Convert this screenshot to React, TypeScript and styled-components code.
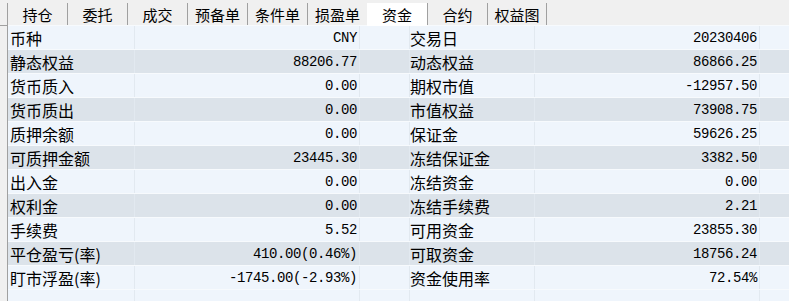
import React from "react";
import styled, { createGlobalStyle } from "styled-components";

const Global = createGlobalStyle`
  html, body { margin: 0; padding: 0; background: #f0f0f0; }
  body { width: 789px; height: 301px; overflow: hidden; }
`;

const Page = styled.div`
  width: 789px;
  height: 301px;
  display: flex;
  flex-direction: column;
  background: #f0f0f0;
  overflow: hidden;
`;

const TabBar = styled.div`
  height: 26px;
  box-sizing: border-box;
  padding: 3px 0 0 7px;
  display: flex;
  border-bottom: 1px solid #a0a0a0;
`;

const Tab = styled.div<{ $active?: boolean; $last?: boolean }>`
  width: 60px;
  box-sizing: border-box;
  height: ${(p) => (p.$active ? "23px" : "22px")};
  display: flex;
  align-items: center;
  justify-content: center;
  font-family: "Noto Sans CJK SC", sans-serif;
  font-size: 15px;
  color: #000;
  background: ${(p) => (p.$active ? "#ffffff" : "transparent")};
  border-left: ${(p) => (p.$active ? "none" : "1px solid #a0a0a0")};
  border-right: ${(p) => (p.$last ? "1px solid #a0a0a0" : "none")};
  position: relative;
  z-index: ${(p) => (p.$active ? 1 : 0)};
  padding-bottom: ${(p) => (p.$active ? "1px" : "0")};
  line-height: 1;
`;

const Panel = styled.div`
  flex: 1;
  margin-left: 7px;
  border-left: 1px solid #a0a0a0;
  display: flex;
  flex-direction: column;
  margin-top: -1px;
  background: #eff5fc;
`;

const Row = styled.div<{ $alt?: boolean; $empty?: boolean }>`
  display: grid;
  grid-template-columns: 127px 225px 50px 125px 225px 1fr;
  height: ${(p) => (p.$empty ? "auto" : "24px")};
  flex: ${(p) => (p.$empty ? "1" : "none")};
  box-sizing: border-box;
  border-top: 1px solid #f7fafd;
  background: ${(p) => (p.$alt ? "#dce3ea" : "#eff5fc")};
`;

const Cell = styled.div<{ $kind: "label" | "label2" | "value" | "blank" }>`
  box-sizing: border-box;
  display: flex;
  align-items: center;
  border-right: 1px solid #e2e9f0;
  white-space: nowrap;
  overflow: hidden;
  color: #000;
  justify-content: ${(p) => (p.$kind === "value" ? "flex-end" : "flex-start")};
  padding-left: ${(p) => (p.$kind === "label" ? "2px" : p.$kind === "label2" ? "0px" : "0")};
  padding-right: ${(p) => (p.$kind === "value" ? "2px" : "0")};
  font-family: ${(p) =>
    p.$kind === "value"
      ? `"Liberation Mono", "Noto Sans CJK SC", monospace`
      : `"Noto Sans CJK SC", sans-serif`};
  font-size: ${(p) => (p.$kind === "value" ? "14px" : "16px")};
  letter-spacing: ${(p) => (p.$kind === "value" ? "-0.4px" : "0")};
  line-height: 1;
`;

const LastCell = styled.div``;

const tabs = ["持仓", "委托", "成交", "预备单", "条件单", "损盈单", "资金", "合约", "权益图"];

const rows: [string, string, string, string][] = [
  ["币种", "CNY", "交易日", "20230406"],
  ["静态权益", "88206.77", "动态权益", "86866.25"],
  ["货币质入", "0.00", "期权市值", "-12957.50"],
  ["货币质出", "0.00", "市值权益", "73908.75"],
  ["质押余额", "0.00", "保证金", "59626.25"],
  ["可质押金额", "23445.30", "冻结保证金", "3382.50"],
  ["出入金", "0.00", "冻结资金", "0.00"],
  ["权利金", "0.00", "冻结手续费", "2.21"],
  ["手续费", "5.52", "可用资金", "23855.30"],
  ["平仓盈亏(率)", "410.00(0.46%)", "可取资金", "18756.24"],
  ["盯市浮盈(率)", "-1745.00(-2.93%)", "资金使用率", "72.54%"],
];

export default function App() {
  return (
    <>
      <Global />
      <Page>
        <TabBar>
          {tabs.map((t, i) => (
            <Tab key={t} $active={t === "资金"} $last={i === tabs.length - 1}>
              {t}
            </Tab>
          ))}
        </TabBar>
        <Panel>
          {rows.map((r, i) => (
            <Row key={r[0]} $alt={i % 2 === 1}>
              <Cell $kind="label">{r[0]}</Cell>
              <Cell $kind="value">{r[1]}</Cell>
              <Cell $kind="blank" />
              <Cell $kind="label2">{r[2]}</Cell>
              <Cell $kind="value">{r[3]}</Cell>
              <LastCell />
            </Row>
          ))}
          <Row $empty>
            <Cell $kind="label" />
            <Cell $kind="value" />
            <Cell $kind="blank" />
            <Cell $kind="label2" />
            <Cell $kind="value" />
            <LastCell />
          </Row>
        </Panel>
      </Page>
    </>
  );
}
